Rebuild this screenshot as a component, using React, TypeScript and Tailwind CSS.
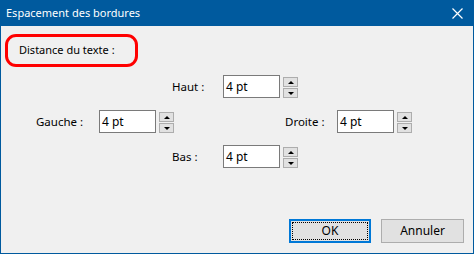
import React from "react";

function Spin() {
  return (
    <div className="ml-[3px] mt-[2px] flex flex-col gap-[1px]">
      <div className="w-[15px] h-[10px] border border-[#adadad] bg-[#e1e1e1] flex items-center justify-center">
        <div className="w-0 h-0 border-l-[3px] border-r-[3px] border-b-[3px] border-l-transparent border-r-transparent border-b-black" />
      </div>
      <div className="w-[15px] h-[10px] border border-[#adadad] bg-[#e1e1e1] flex items-center justify-center">
        <div className="w-0 h-0 border-l-[3px] border-r-[3px] border-t-[3px] border-l-transparent border-r-transparent border-t-black" />
      </div>
    </div>
  );
}

function Field({ label, labelW }: { label: string; labelW: string }) {
  return (
    <div className="flex items-start">
      <div className={`${labelW} h-[23px] flex items-center text-[11.5px] text-black`}>{label}</div>
      <div className="w-[57px] h-[23px] border border-[#7a7a7a] bg-white flex items-center pl-[2px] text-[12px] text-black">
        4 pt
      </div>
      <Spin />
    </div>
  );
}

export default function App() {
  return (
    <div
      className="w-[474px] h-[254px] flex flex-col bg-[#005a9e] px-[1px] pb-[1px]"
      style={{ fontFamily: '"Noto Sans", "Open Sans", sans-serif' }}
    >
      {/* title bar */}
      <div className="h-[26px] flex items-center justify-between pl-[5px] pr-[10px] text-white text-[11px]">
        <span>Espacement des bordures</span>
        <svg width="11" height="11" viewBox="0 0 11 11">
          <path d="M0.5 0.5 L10.5 10.5 M10.5 0.5 L0.5 10.5" stroke="white" strokeWidth="1.2" />
        </svg>
      </div>

      {/* body */}
      <div className="flex-1 bg-[#f0f0f0] flex flex-col pt-[8px] pb-[10px]">
        <div className="ml-[4px] w-[133px] h-[33px] border-[3px] border-[#ff0000] rounded-[11px] flex items-center pl-[11px] text-[11px] text-black">
          Distance du texte :
        </div>

        <div className="mt-[8px] pl-[171px]">
          <Field label="Haut :" labelW="w-[51px]" />
        </div>
        <div className="mt-[12px] pl-[35px] flex gap-[111px]">
          <Field label="Gauche :" labelW="w-[63px]" />
          <Field label="Droite :" labelW="w-[52px]" />
        </div>
        <div className="mt-[12px] pl-[171px]">
          <Field label="Bas :" labelW="w-[51px]" />
        </div>

        <div className="mt-auto flex justify-end gap-[10px] pr-[9px]">
          <div className="w-[82px] h-[24px] border-2 border-[#0078d7] bg-[#e1e1e1] p-[1px]">
            <div className="w-full h-full border border-dotted border-black flex items-center justify-center text-[12px] text-black">
              OK
            </div>
          </div>
          <div className="w-[83px] h-[24px] border border-[#adadad] bg-[#e1e1e1] flex items-center justify-center text-[12px] text-black">
            Annuler
          </div>
        </div>
      </div>
    </div>
  );
}
